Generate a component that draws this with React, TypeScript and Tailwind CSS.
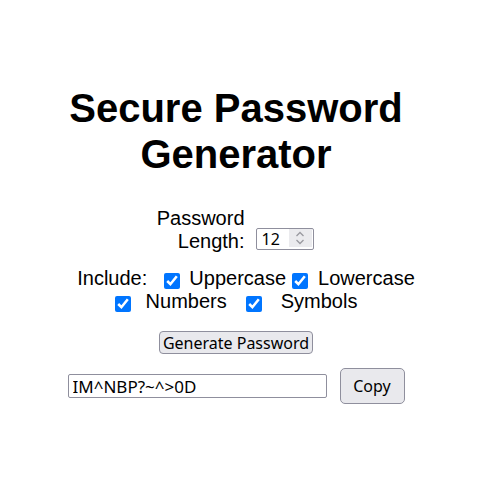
import React from "react";

export default function App() {
  const ctl = "font-['Noto_Sans','Open_Sans',sans-serif]";
  return (
    <div className="min-h-screen bg-white text-black font-['Liberation_Sans',Arial,sans-serif] text-[20px] leading-[23px]">
      <div className="flex flex-col items-center pt-[85px] pr-[30px]">
        <h1 className="w-[360px] text-center text-[40px] leading-[46px] font-bold">
          Secure Password Generator
        </h1>

        <div className="mt-[30px] flex items-end mr-[4px]">
          <label htmlFor="len" className="w-[90px] text-right">
            Password Length:
          </label>
          <div className="relative ml-[11px] mb-[4px] w-[58px] h-[22px]">
            <input
              id="len"
              type="text"
              defaultValue="12"
              className={`${ctl} w-full h-full border border-[#8f8f9d] rounded-[2px] pl-[5px] pr-[26px] text-[16px] leading-[20px] text-black outline-none`}
            />
            <div className="absolute right-[2px] top-[2px] w-[23px] h-[18px] bg-[#ebebee] flex items-center justify-center">
              <svg width="12" height="16" viewBox="0 0 12 16" fill="none" stroke="#9a9aa0" strokeWidth="1.3">
                <path d="M2.5 6 L6 2.5 L9.5 6" />
                <path d="M2.5 10 L6 13.5 L9.5 10" />
              </svg>
            </div>
          </div>
        </div>

        <div className="mt-[14px] flex flex-col items-center">
          <div className="flex items-center ml-[20px] h-[23px]">
            <span>Include:</span>
            <input type="checkbox" defaultChecked className="m-0 ml-[17px] mt-[4px] w-4 h-4" />
            <span className="ml-[9px]">Uppercase</span>
            <input type="checkbox" defaultChecked className="m-0 ml-[6px] mt-[4px] w-4 h-4" />
            <span className="ml-[10px]">Lowercase</span>
          </div>
          <div className="flex items-center h-[23px]">
            <input type="checkbox" defaultChecked className="m-0 mt-[4px] w-4 h-4" />
            <span className="ml-[15px]">Numbers</span>
            <input type="checkbox" defaultChecked className="m-0 ml-[19px] mt-[4px] w-4 h-4" />
            <span className="ml-[19px]">Symbols</span>
          </div>
        </div>

        <button
          className={`${ctl} mt-[18px] w-[154px] h-[23px] border border-[#8f8f9d] bg-[#e9e9ed] rounded-[4px] text-[16px] leading-[20px] text-black flex items-center justify-center`}
        >
          Generate Password
        </button>

        <div className="mt-[14px] flex items-center gap-[13px]">
          <input
            type="text"
            readOnly
            value="IM^NBP?~^>0D"
            className={`${ctl} w-[259px] h-[24px] border border-[#8f8f9d] rounded-[2px] px-[4px] text-[17px] leading-[20px] text-black outline-none`}
          />
          <button
            className={`${ctl} w-[65px] h-[36px] border border-[#8f8f9d] bg-[#e9e9ed] rounded-[5px] text-[16px] text-black flex items-center justify-center`}
          >
            Copy
          </button>
        </div>
      </div>
    </div>
  );
}
